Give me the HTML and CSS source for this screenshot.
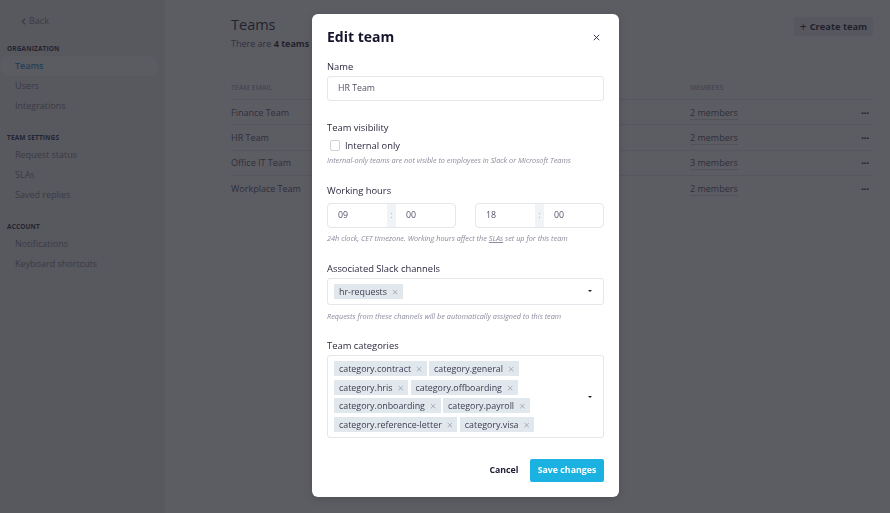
FILE: index.html
```html
<!DOCTYPE html>
<html lang="en">

<head>
    <meta charset="UTF-8" />
    <meta name="viewport" content="width=device-width, initial-scale=1.0" />
    <title>Teams - Edit team</title>

    <link rel="stylesheet" href="styles.css">
</head>

<body>
    <div class="app">
        <aside class="sidebar">
            <a class="back" href="#">
                <svg width="5" height="7" viewBox="0 0 5 7"><path d="M4 0.8 L1.2 3.5 L4 6.2" fill="none" stroke="currentColor" stroke-width="1.3"/></svg>
                Back
            </a>
            <nav class="nav-section">
                <h3>Organization</h3>
                <a class="nav-item active" href="#">Teams</a>
                <a class="nav-item" href="#">Users</a>
                <a class="nav-item" href="#">Integrations</a>
            </nav>
            <nav class="nav-section">
                <h3>Team settings</h3>
                <a class="nav-item" href="#">Request status</a>
                <a class="nav-item" href="#">SLAs</a>
                <a class="nav-item" href="#">Saved replies</a>
            </nav>
            <nav class="nav-section">
                <h3>Account</h3>
                <a class="nav-item" href="#">Notifications</a>
                <a class="nav-item" href="#">Keyboard shortcuts</a>
            </nav>
        </aside>

        <main class="content">
            <header class="page-head">
                <div>
                    <h1>Teams</h1>
                    <p>There are <b>4 teams</b> in your organization</p>
                </div>
                <button class="create-btn"><span class="plus">+</span> Create team</button>
            </header>

            <table class="teams">
                <thead>
                    <tr>
                        <th>Team email</th>
                        <th class="col-members">Members</th>
                        <th class="col-actions"></th>
                    </tr>
                </thead>
                <tbody>
                    <tr>
                        <td>Finance Team</td>
                        <td class="col-members"><span class="members">2 members</span></td>
                        <td class="col-actions">&middot;&middot;&middot;</td>
                    </tr>
                    <tr>
                        <td>HR Team</td>
                        <td class="col-members"><span class="members">2 members</span></td>
                        <td class="col-actions">&middot;&middot;&middot;</td>
                    </tr>
                    <tr>
                        <td>Office IT Team</td>
                        <td class="col-members"><span class="members">3 members</span></td>
                        <td class="col-actions">&middot;&middot;&middot;</td>
                    </tr>
                    <tr>
                        <td>Workplace Team</td>
                        <td class="col-members"><span class="members">2 members</span></td>
                        <td class="col-actions">&middot;&middot;&middot;</td>
                    </tr>
                </tbody>
            </table>
        </main>
    </div>

    <div class="overlay">
        <form class="modal">
            <div class="modal-head">
                <h2>Edit team</h2>
                <button type="button" class="close" aria-label="Close">
                    <svg width="7" height="7" viewBox="0 0 7 7"><path d="M0.8 0.8 L6.2 6.2 M6.2 0.8 L0.8 6.2" stroke="currentColor" stroke-width="0.9"/></svg>
                </button>
            </div>

            <div class="field field-name">
                <label for="name">Name</label>
                <input class="text-input" type="text" id="name" value="HR Team" />
            </div>

            <div class="field">
                <label>Team visibility</label>
                <label class="check"><span class="box"></span>Internal only</label>
                <p class="help">Internal-only teams are not visible to employees in Slack or Microsoft Teams</p>
            </div>

            <div class="field">
                <label>Working hours</label>
                <div class="hours">
                    <div class="time">
                        <span class="part">09</span><span class="sep">:</span><span class="part">00</span>
                    </div>
                    <div class="time">
                        <span class="part">18</span><span class="sep">:</span><span class="part">00</span>
                    </div>
                </div>
                <p class="help spaced">24h clock, CET timezone. Working hours affect the <u>SLAs</u> set up for this team</p>
            </div>

            <div class="field">
                <label>Associated Slack channels</label>
                <div class="select">
                    <div class="values">
                        <span class="tag">hr-requests <i>&times;</i></span>
                    </div>
                    <span class="caret"></span>
                </div>
                <p class="help spaced">Requests from these channels will be automatically assigned to this team</p>
            </div>

            <div class="field">
                <label>Team categories</label>
                <div class="select">
                    <div class="values">
                        <span class="tag">category.contract <i>&times;</i></span>
                        <span class="tag">category.general <i>&times;</i></span>
                        <span class="tag">category.hris <i>&times;</i></span>
                        <span class="tag">category.offboarding <i>&times;</i></span>
                        <span class="tag">category.onboarding <i>&times;</i></span>
                        <span class="tag">category.payroll <i>&times;</i></span>
                        <span class="tag">category.reference-letter <i>&times;</i></span>
                        <span class="tag">category.visa <i>&times;</i></span>
                    </div>
                    <span class="caret"></span>
                </div>
            </div>

            <div class="modal-foot">
                <button type="button" class="cancel">Cancel</button>
                <button type="submit" class="save">Save changes</button>
            </div>
        </form>
    </div>
</body>

</html>
```

FILE: styles.css
```css
* {
    margin: 0;
    padding: 0;
    box-sizing: border-box;
}

html,
body {
    height: 100%;
}

body {
    font-family: "Open Sans", "Liberation Sans", sans-serif;
    color: #14142b;
    background: #fff;
}

a {
    color: inherit;
    text-decoration: none;
}

button {
    font-family: inherit;
    border: 0;
    background: none;
    cursor: pointer;
}

.app {
    display: flex;
    height: 100%;
}

/**
 * Sidebar
 */
.sidebar {
    width: 165px;
    flex-shrink: 0;
    background: #eeeef0;
    padding-top: 15px;
}

.back {
    display: flex;
    align-items: center;
    gap: 3px;
    padding-left: 21px;
    font-size: 9px;
    line-height: 12px;
    color: #7c7c8c;
    margin-bottom: 16px;
}

.nav-section {
    display: flex;
    flex-direction: column;
    margin-bottom: 16px;

    h3 {
        font-size: 6.5px;
        font-weight: 700;
        text-transform: uppercase;
        letter-spacing: 0.15px;
        line-height: 11px;
        padding-left: 7px;
        margin-bottom: 2px;
        color: #1c1c33;
    }
}

.nav-item {
    font-size: 9px;
    line-height: 20px;
    padding-left: 15px;
    margin-right: 7px;
    color: #7a7a8a;
    border-radius: 10px;
}

.nav-item.active {
    background: #fafafc;
    color: #1a8fc8;
    font-weight: 600;
}

/**
 * Main content
 */
.content {
    flex: 1;
    padding: 15px 17px 0 66px;
}

.page-head {
    display: flex;
    justify-content: space-between;
    align-items: flex-start;

    h1 {
        font-size: 14.5px;
        font-weight: 400;
        line-height: 20px;
        margin-bottom: 2px;
    }

    p {
        font-size: 9px;
        line-height: 14px;
        color: #55556a;

        b {
            color: #14142b;
            font-weight: 700;
        }
    }
}

.create-btn {
    margin-top: 2px;
    height: 19px;
    width: 79px;
    border-radius: 3px;
    background: #eaeaee;
    font-size: 9.3px;
    font-weight: 700;
    color: #14142b;
    display: flex;
    align-items: center;
    justify-content: center;
    gap: 3px;

    .plus {
        font-weight: 400;
        font-size: 12px;
        line-height: 1;
    }
}

.teams {
    width: 100%;
    margin-top: 31px;
    border-collapse: collapse;

    th {
        text-align: left;
        font-size: 6.8px;
        font-weight: 400;
        text-transform: uppercase;
        letter-spacing: 0.2px;
        color: #8a8aa0;
        line-height: 12px;
        padding-bottom: 5px;
    }

    td {
        font-size: 9px;
        color: #4c4c62;
        height: 25.3px;
        border-top: 1px solid #e6e6ec;
    }

    .col-members {
        width: 171px;
    }

    .col-actions {
        width: 12px;
        text-align: right;
        font-weight: 800;
        font-size: 9px;
        color: #1c1c33;
        padding-right: 4px;
    }
}

.members {
    border-bottom: 1px solid #d6d6e0;
}

/**
 * Modal
 */
.overlay {
    position: fixed;
    inset: 0;
    background: rgba(38, 38, 47, 0.75);
    padding: 14px 0 0 312px;
}

.modal {
    width: 307px;
    background: #fff;
    border-radius: 6px;
    padding: 15px;
    box-shadow: 0 2px 8px rgba(0, 0, 0, 0.15);
    color: #2b2b40;
}

.modal-head {
    display: flex;
    justify-content: space-between;
    align-items: center;
    margin-bottom: 15px;

    h2 {
        font-size: 14px;
        font-weight: 700;
        line-height: 16px;
        color: #14142b;
    }
}

.close {
    color: #2b2b40;
    display: flex;
    margin-right: 4px;
}

.field {
    display: flex;
    flex-direction: column;
    margin-bottom: 17.5px;

    > label {
        font-size: 9.4px;
        line-height: 13px;
        margin-bottom: 2.7px;
    }
}

.field-name {
    margin-bottom: 20.2px;
}

.text-input {
    height: 25.6px;
    border: 1px solid #e3e6ea;
    border-radius: 3px;
    padding: 0 10px;
    font-family: inherit;
    font-size: 8.8px;
    color: #55556a;
}

.check {
    display: flex;
    align-items: center;
    gap: 5px;
    font-size: 9.4px;
    line-height: 14px;
    padding-left: 2.5px;
    margin-top: 1.8px;

    .box {
        width: 10.5px;
        height: 10.5px;
        border: 1px solid #cfd3d8;
        border-radius: 2px;
    }
}

.help {
    font-size: 7.3px;
    font-style: italic;
    line-height: 11px;
    color: #8c8c9e;
    margin-top: 0.5px;
}

.help.spaced {
    margin-top: 5.6px;
}

.hours {
    display: flex;
    justify-content: space-between;
    margin-top: 3.2px;
}

.time {
    display: flex;
    width: 129px;
    height: 25.3px;
    border: 1px solid #e3e6ea;
    border-radius: 4px;
    font-size: 8.8px;
    color: #55556a;
    overflow: hidden;

    .part {
        flex: 1;
        display: flex;
        align-items: center;
        padding-left: 10px;
    }

    .sep {
        width: 9px;
        background: #f1f4f7;
        color: #a8adb6;
        display: flex;
        align-items: center;
        justify-content: center;
    }
}

.select {
    display: flex;
    align-items: center;
    border: 1px solid #e3e6ea;
    border-radius: 3px;
    padding: 5.3px 0 5.3px 6.3px;

    .values {
        flex: 1;
        display: flex;
        flex-wrap: wrap;
        gap: 3.5px 2.7px;
        padding-right: 18px;
    }
}

.tag {
    display: flex;
    align-items: center;
    height: 15px;
    padding: 0 4.4px 0 4.7px;
    background: #e0e7ed;
    font-size: 8.9px;
    color: #3c3c50;

    i {
        font-style: normal;
        font-size: 11px;
        font-weight: 300;
        color: #8e949e;
        margin-left: 5px;
    }
}

.caret {
    width: 26px;
    display: flex;
    justify-content: center;

    &::before {
        content: "";
        border-left: 2px solid transparent;
        border-right: 2px solid transparent;
        border-top: 2.5px solid #1c1c33;
    }
}

.modal-foot {
    display: flex;
    justify-content: flex-end;
    align-items: center;
    gap: 11.5px;
    margin-top: 20.5px;
}

.cancel {
    font-size: 8.8px;
    font-weight: 700;
    color: #1c1c33;
}

.save {
    height: 23.3px;
    width: 74px;
    border-radius: 2px;
    background: #1bb2e2;
    color: #fff;
    font-size: 8.8px;
    font-weight: 700;
}
```
